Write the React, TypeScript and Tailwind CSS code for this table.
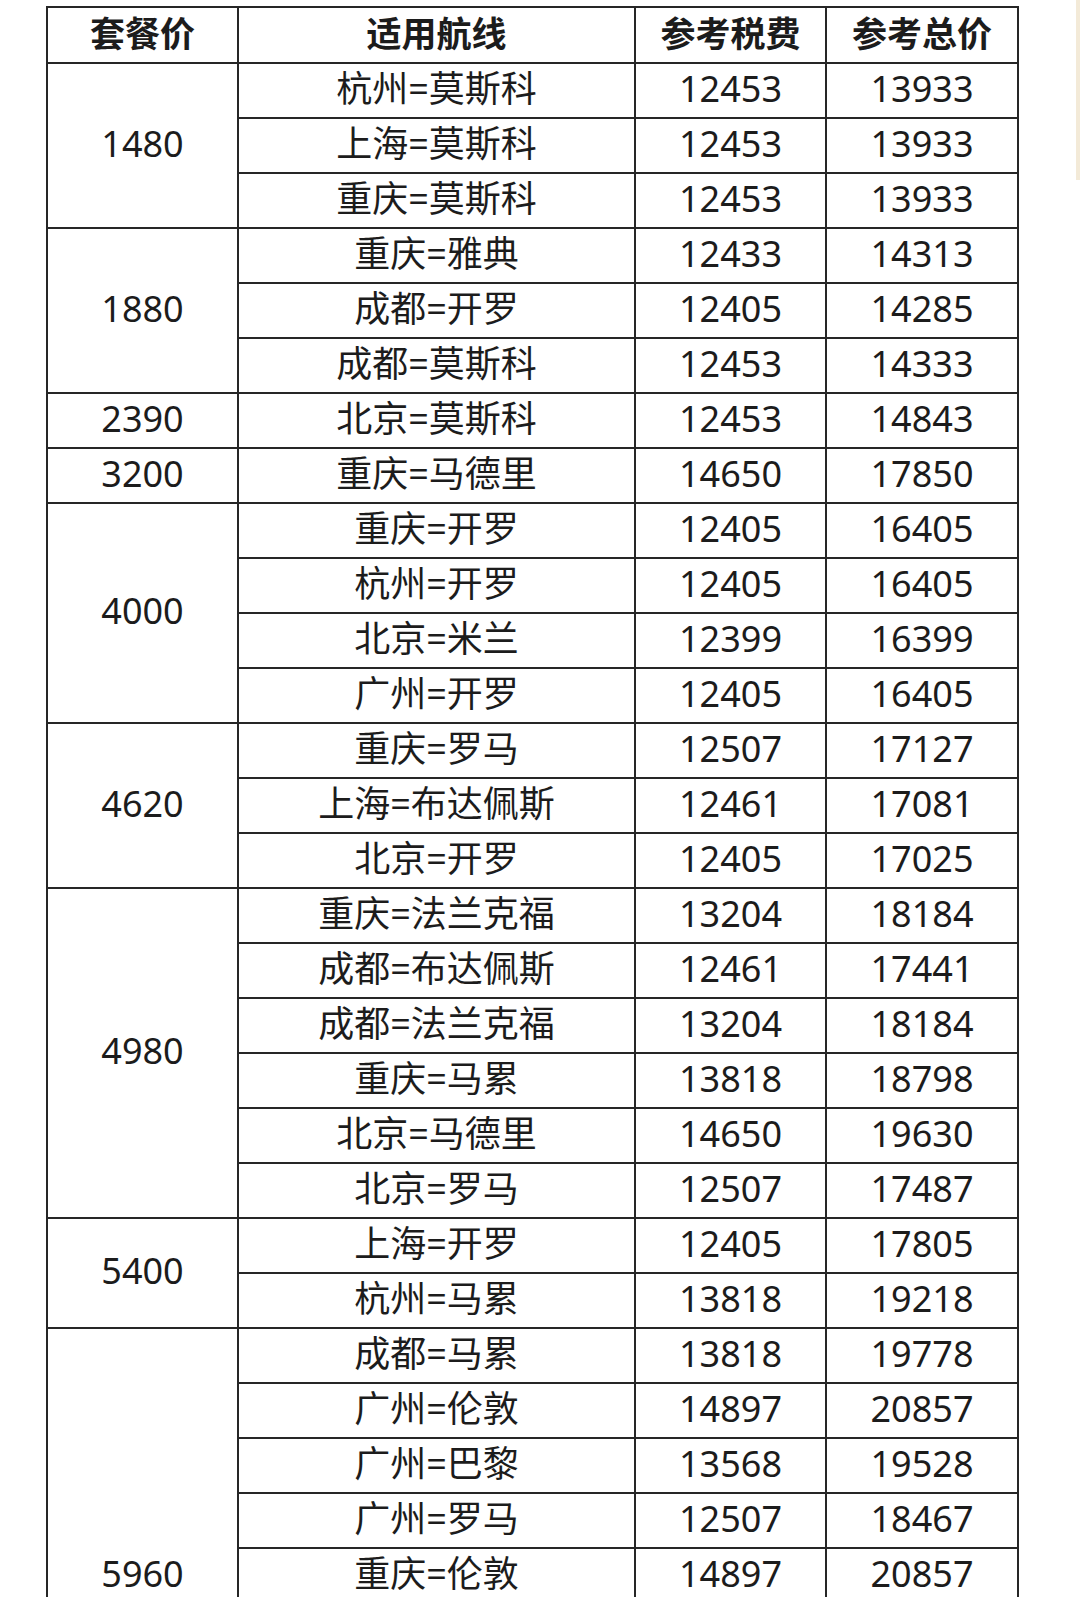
import React from "react";

type Route = { name: string; tax: number; total: number };
type Group = { price: number; routes: Route[] };

const groups: Group[] = [
  {
    price: 1480,
    routes: [
      { name: "杭州=莫斯科", tax: 12453, total: 13933 },
      { name: "上海=莫斯科", tax: 12453, total: 13933 },
      { name: "重庆=莫斯科", tax: 12453, total: 13933 },
    ],
  },
  {
    price: 1880,
    routes: [
      { name: "重庆=雅典", tax: 12433, total: 14313 },
      { name: "成都=开罗", tax: 12405, total: 14285 },
      { name: "成都=莫斯科", tax: 12453, total: 14333 },
    ],
  },
  { price: 2390, routes: [{ name: "北京=莫斯科", tax: 12453, total: 14843 }] },
  { price: 3200, routes: [{ name: "重庆=马德里", tax: 14650, total: 17850 }] },
  {
    price: 4000,
    routes: [
      { name: "重庆=开罗", tax: 12405, total: 16405 },
      { name: "杭州=开罗", tax: 12405, total: 16405 },
      { name: "北京=米兰", tax: 12399, total: 16399 },
      { name: "广州=开罗", tax: 12405, total: 16405 },
    ],
  },
  {
    price: 4620,
    routes: [
      { name: "重庆=罗马", tax: 12507, total: 17127 },
      { name: "上海=布达佩斯", tax: 12461, total: 17081 },
      { name: "北京=开罗", tax: 12405, total: 17025 },
    ],
  },
  {
    price: 4980,
    routes: [
      { name: "重庆=法兰克福", tax: 13204, total: 18184 },
      { name: "成都=布达佩斯", tax: 12461, total: 17441 },
      { name: "成都=法兰克福", tax: 13204, total: 18184 },
      { name: "重庆=马累", tax: 13818, total: 18798 },
      { name: "北京=马德里", tax: 14650, total: 19630 },
      { name: "北京=罗马", tax: 12507, total: 17487 },
    ],
  },
  {
    price: 5400,
    routes: [
      { name: "上海=开罗", tax: 12405, total: 17805 },
      { name: "杭州=马累", tax: 13818, total: 19218 },
    ],
  },
  {
    price: 5960,
    routes: [
      { name: "成都=马累", tax: 13818, total: 19778 },
      { name: "广州=伦敦", tax: 14897, total: 20857 },
      { name: "广州=巴黎", tax: 13568, total: 19528 },
      { name: "广州=罗马", tax: 12507, total: 18467 },
      { name: "重庆=伦敦", tax: 14897, total: 20857 },
      { name: "上海=伦敦", tax: 14897, total: 20857 },
      { name: "北京=伦敦", tax: 14897, total: 20857 },
      { name: "上海=巴黎", tax: 13568, total: 19528 },
      { name: "北京=巴黎", tax: 13568, total: 19528 },
    ],
  },
];

const cell = "border-2 border-[#262626] text-center align-middle p-0 pb-[4px]";

export default function App() {
  return (
    <div
      className="relative h-[1597px] w-[1080px] overflow-hidden bg-white pl-[46px] pt-[6px] text-[#1c1c1c]"
      style={{ fontFamily: '"Noto Sans", "Noto Sans CJK SC", sans-serif' }}
    >
      <div className="absolute right-0 top-0 h-[180px] w-[4px] bg-[#f3ead8]" />
      <table className="w-[971px] table-fixed border-collapse text-[36px] leading-none">
        <colgroup>
          <col className="w-[191px]" />
          <col className="w-[397px]" />
          <col className="w-[191px]" />
          <col className="w-[192px]" />
        </colgroup>
        <thead>
          <tr className="h-[56px]">
            <th className={`${cell} text-[35px] font-bold`}>套餐价</th>
            <th className={`${cell} text-[35px] font-bold`}>适用航线</th>
            <th className={`${cell} text-[35px] font-bold`}>参考税费</th>
            <th className={`${cell} text-[35px] font-bold`}>参考总价</th>
          </tr>
        </thead>
        <tbody>
          {groups.map((g) =>
            g.routes.map((r, i) => (
              <tr key={g.price + r.name} className="h-[55px]">
                {i === 0 && (
                  <td className={cell} rowSpan={g.routes.length}>
                    {g.price}
                  </td>
                )}
                <td className={cell}>{r.name}</td>
                <td className={cell}>{r.tax}</td>
                <td className={cell}>{r.total}</td>
              </tr>
            ))
          )}
        </tbody>
      </table>
    </div>
  );
}
